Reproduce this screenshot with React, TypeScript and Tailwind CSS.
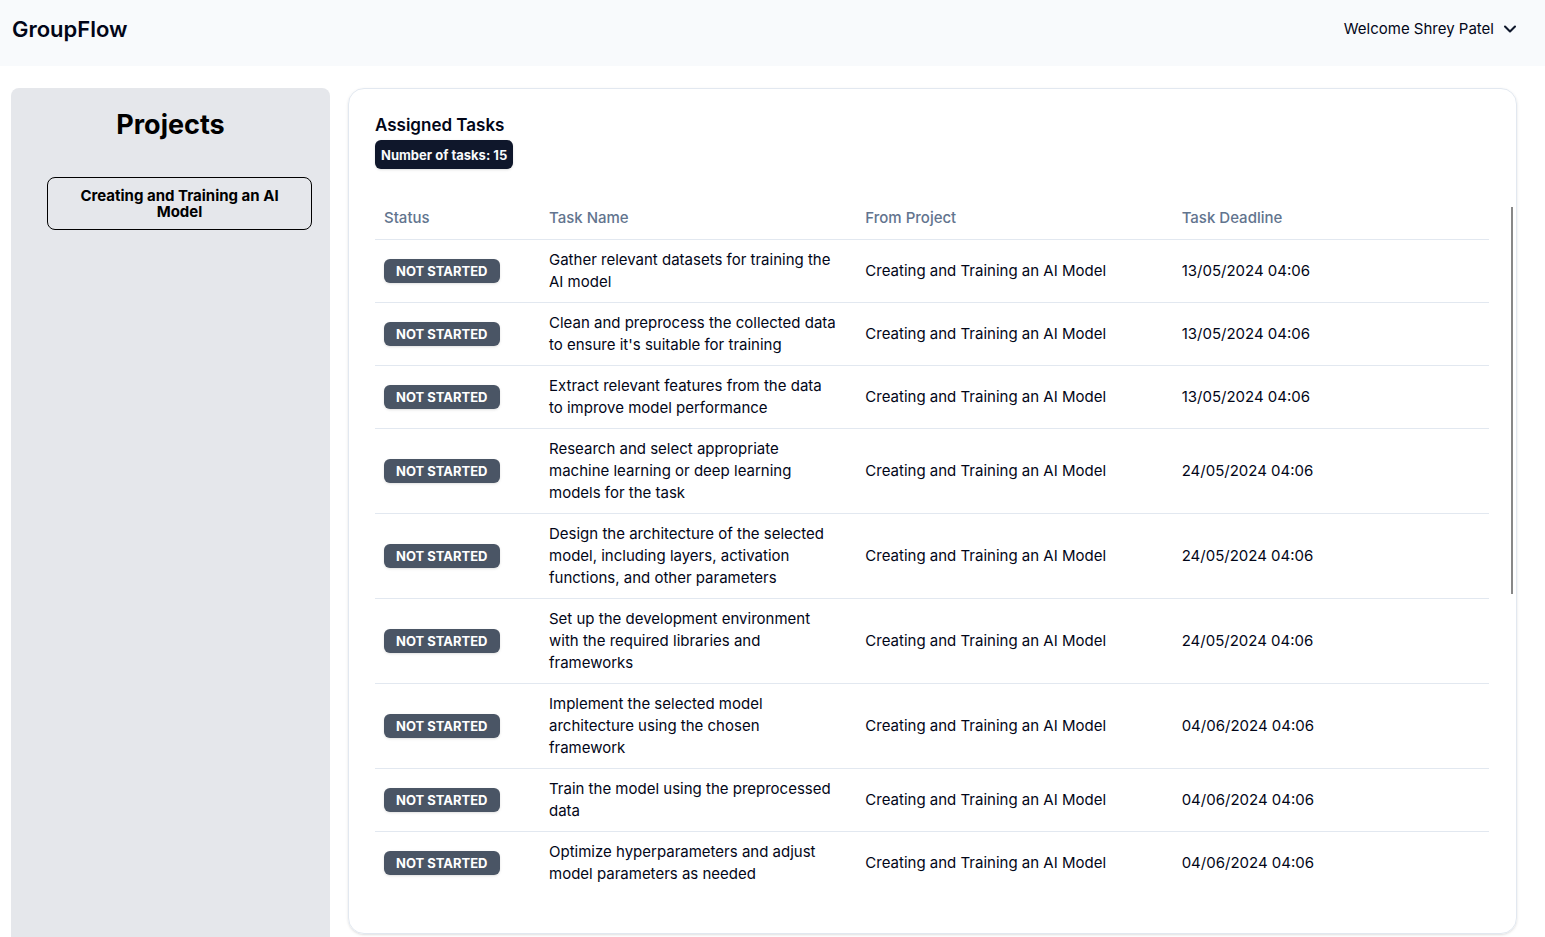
import { ChevronDown } from "lucide-react";

type Task = { name: string; project: string; deadline: string };

const project = "Creating and Training an AI Model";

const tasks: Task[] = [
  { name: "Gather relevant datasets for training the AI model", project, deadline: "13/05/2024 04:06" },
  { name: "Clean and preprocess the collected data to ensure it's suitable for training", project, deadline: "13/05/2024 04:06" },
  { name: "Extract relevant features from the data to improve model performance", project, deadline: "13/05/2024 04:06" },
  { name: "Research and select appropriate machine learning or deep learning models for the task", project, deadline: "24/05/2024 04:06" },
  { name: "Design the architecture of the selected model, including layers, activation functions, and other parameters", project, deadline: "24/05/2024 04:06" },
  { name: "Set up the development environment with the required libraries and frameworks", project, deadline: "24/05/2024 04:06" },
  { name: "Implement the selected model architecture using the chosen framework", project, deadline: "04/06/2024 04:06" },
  { name: "Train the model using the preprocessed data", project, deadline: "04/06/2024 04:06" },
  { name: "Optimize hyperparameters and adjust model parameters as needed", project, deadline: "04/06/2024 04:06" },
];

function Header() {
  return (
    <header className="flex h-[66px] items-start justify-between bg-slate-50 pl-3 pr-[25px]">
      <a href="#" className="pt-[13px] text-[22px] font-semibold leading-8">
        GroupFlow
      </a>
      <button type="button" className="flex items-center gap-[6px] pt-[18px] text-[15px] leading-[22px]">
        Welcome Shrey Patel
        <ChevronDown size={20} strokeWidth={2.5} className="text-slate-900" />
      </button>
    </header>
  );
}

function Sidebar() {
  return (
    <aside className="w-[319px] shrink-0 rounded-t-lg bg-gray-200 pl-9 pr-[18px] pt-[19px]">
      <h2 className="pr-[18px] text-center text-[27px] font-bold leading-9 text-black">Projects</h2>
      <button
        type="button"
        className="mt-[34px] w-full rounded-lg border border-black px-6 pb-[9px] pt-[10px] text-center text-[15px] font-bold leading-4 text-black"
      >
        {project}
      </button>
    </aside>
  );
}

function TaskTable() {
  return (
    <div className="min-w-0 flex-1">
      <table className="w-full table-fixed border-collapse text-left text-[15px] leading-[22px]">
        <thead>
          <tr className="h-11 border-b border-slate-200 text-slate-500">
            <th scope="col" className="w-[165px] px-[9px] pt-[2px] font-medium">Status</th>
            <th scope="col" className="px-[9px] pt-[2px] font-medium">Task Name</th>
            <th scope="col" className="px-[9px] pt-[2px] font-medium">From Project</th>
            <th scope="col" className="px-[9px] pt-[2px] font-medium">Task Deadline</th>
          </tr>
        </thead>
        <tbody>
          {tasks.map((task) => (
            <tr key={task.name} className="border-b border-slate-200 last:border-0">
              <td className="p-[9px]">
                <span className="inline-block whitespace-nowrap rounded-md bg-gray-600 px-3 py-[3px] align-middle text-[13px] font-bold leading-[18px] text-white shadow-sm">
                  NOT STARTED
                </span>
              </td>
              <td className="py-[9px] pl-[9px] pr-5">{task.name}</td>
              <td className="p-[9px]">{task.project}</td>
              <td className="p-[9px]">{task.deadline}</td>
            </tr>
          ))}
        </tbody>
      </table>
    </div>
  );
}

export default function App() {
  return (
    <div className="flex min-h-screen flex-col bg-white font-['Inter',sans-serif] text-slate-950">
      <Header />
      <main className="flex flex-1 gap-[18px] pl-[11px] pr-7 pt-[22px]">
        <Sidebar />
        <section className="mb-[3px] min-w-0 flex-1 rounded-2xl border border-slate-200 pb-[26px] pl-[26px] pr-[3px] pt-[26px] shadow-sm">
          <h3 className="text-[17px] font-semibold leading-5">Assigned Tasks</h3>
          <div className="mt-[5px] w-fit rounded-md bg-slate-900 px-[6px] pb-1 pt-[6px] text-[13px] font-bold leading-[19px] text-slate-50 shadow-sm">
            Number of tasks: 15
          </div>
          <div className="mt-[26px] flex items-start gap-[22px]">
            <TaskTable />
            <div className="mt-3 h-[387px] w-[2px] bg-[#888888]" aria-hidden="true" />
          </div>
        </section>
      </main>
    </div>
  );
}
